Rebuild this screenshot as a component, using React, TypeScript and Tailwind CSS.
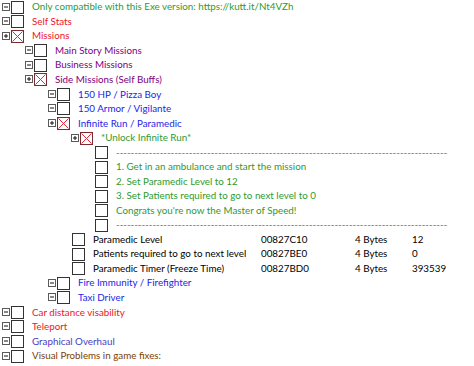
import React from 'react';

type Row = {
  level: number;
  exp?: '+' | '-';
  checked?: boolean;
  text: string;
  color: string;
  addr?: string;
  type?: string;
  value?: string;
};

const GREEN = 'text-[#2f9a2f]';
const RED = 'text-[#f0141e]';
const PURPLE = 'text-[#800080]';
const BLUE = 'text-[#2424e8]';

const DASHES = '-'.repeat(140);

const rows: Row[] = [
  { level: 0, exp: '-', text: 'Only compatible with this Exe version: https://kutt.it/Nt4VZh', color: GREEN },
  { level: 0, exp: '-', text: 'Self Stats', color: RED },
  { level: 0, exp: '+', checked: true, text: 'Missions', color: RED },
  { level: 1, exp: '-', text: 'Main Story Missions', color: PURPLE },
  { level: 1, exp: '-', text: 'Business Missions', color: PURPLE },
  { level: 1, exp: '+', checked: true, text: 'Side Missions (Self Buffs)', color: PURPLE },
  { level: 2, exp: '-', text: '150 HP / Pizza Boy', color: BLUE },
  { level: 2, exp: '-', text: '150 Armor / Vigilante', color: BLUE },
  { level: 2, exp: '+', checked: true, text: 'Infinite Run / Paramedic', color: BLUE },
  { level: 3, exp: '+', checked: true, text: '*Unlock Infinite Run*', color: GREEN },
  { level: 4, text: DASHES, color: GREEN },
  { level: 4, text: '1. Get in an ambulance and start the mission', color: GREEN },
  { level: 4, text: '2. Set Paramedic Level to 12', color: GREEN },
  { level: 4, text: '3. Set Patients required to go to next level to 0', color: GREEN },
  { level: 4, text: "Congrats you're now the Master of Speed!", color: GREEN },
  { level: 4, text: DASHES, color: GREEN },
  { level: 3, text: 'Paramedic Level', color: 'text-black', addr: '00827C10', type: '4 Bytes', value: '12' },
  { level: 3, text: 'Patients required to go to next level', color: 'text-black', addr: '00827BE0', type: '4 Bytes', value: '0' },
  { level: 3, text: 'Paramedic Timer (Freeze Time)', color: 'text-black', addr: '00827BD0', type: '4 Bytes', value: '393539' },
  { level: 2, exp: '-', text: 'Fire Immunity / Firefighter', color: BLUE },
  { level: 2, exp: '-', text: 'Taxi Driver', color: BLUE },
  { level: 0, exp: '-', text: 'Car distance visability', color: RED },
  { level: 0, exp: '-', text: 'Teleport', color: RED },
  { level: 0, exp: '-', text: 'Graphical Overhaul', color: 'text-[#4b3cc0]' },
  { level: 0, exp: '-', text: 'Visual Problems in game fixes:', color: 'text-[#804000]' },
];

// left padding per level, with and without an expander box
const padExp = ['pl-[2px]', 'pl-[25px]', 'pl-[48px]', 'pl-[71px]', 'pl-[94px]'];
const padLeaf = ['pl-[3px]', 'pl-[26px]', 'pl-[49px]', 'pl-[72px]', 'pl-[95px]'];

function Expander({ sign }: { sign: '+' | '-' }) {
  return (
    <svg width="9" height="9" viewBox="0 0 9 9" className="shrink-0">
      <rect x="0.5" y="0.5" width="7" height="7" fill="#fff" stroke="#5a5a5a" />
      <line x1="2" y1="4" x2="6" y2="4" stroke="#111" />
      {sign === '+' && <line x1="4" y1="2" x2="4" y2="6" stroke="#111" />}
    </svg>
  );
}

function Check({ checked }: { checked?: boolean }) {
  return (
    <svg width="13" height="13" viewBox="0 0 13 13" className="shrink-0">
      <rect x="0.5" y="0.5" width="12" height="12" fill="#fff" stroke={checked ? '#7a2a30' : '#333'} />
      {checked && (
        <>
          <line x1="1.5" y1="1.5" x2="11.5" y2="11.5" stroke="#ec2a36" />
          <line x1="11.5" y1="1.5" x2="1.5" y2="11.5" stroke="#ec2a36" />
        </>
      )}
    </svg>
  );
}

export default function App() {
  return (
    <div className="w-[474px] h-[366px] bg-white overflow-hidden text-[9.8px] leading-none font-['Lato',sans-serif]">
      {rows.map((r, i) => (
        <div key={i} className="grid grid-cols-[261px_94px_57px_1fr] h-[14.54px] items-center">
          <div className={`flex items-center ${r.exp ? padExp[r.level] : padLeaf[r.level]}`}>
            {r.exp && <Expander sign={r.exp} />}
            <Check checked={r.checked} />
            <span
              className={`ml-[8px] whitespace-nowrap ${r.color} ${
                r.text === DASHES ? 'overflow-hidden w-[332px] shrink-0' : ''
              }`}
            >
              {r.text}
            </span>
          </div>
          <span className="text-black">{r.addr}</span>
          <span className="text-black">{r.type}</span>
          <span className="text-black">{r.value}</span>
        </div>
      ))}
    </div>
  );
}
